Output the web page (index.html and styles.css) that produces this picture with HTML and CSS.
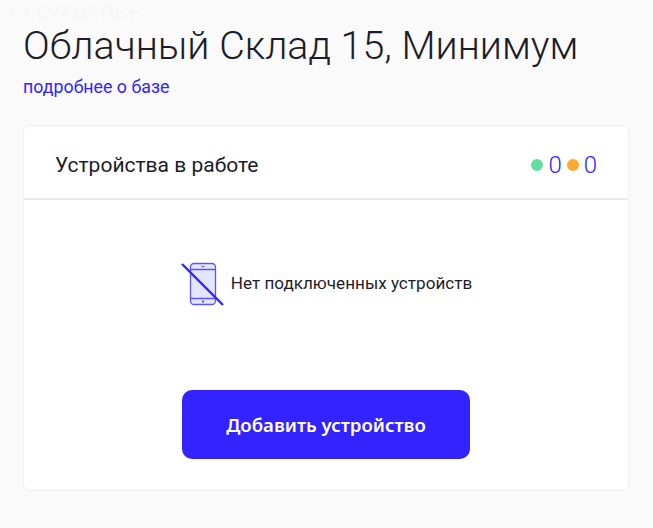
FILE: index.html
```html
<!DOCTYPE html>
<html lang="ru">
<head>
  <meta charset="UTF-8">
  <title>Облачный Склад 15, Минимум</title>
  <link rel="stylesheet" href="styles.css">
</head>
<body>
  <div class="logo">CLEVERENCE</div>
  <main class="content">
    <h1 class="title">Облачный Склад 15, Минимум</h1>
    <a class="more" href="#">подробнее о базе</a>
    <section class="card">
      <header class="card-head">
        <h2 class="card-title">Устройства в работе</h2>
        <div class="counters">
          <span class="dot dot-green"></span>
          <span class="count">0</span>
          <span class="dot dot-orange"></span>
          <span class="count">0</span>
        </div>
      </header>
      <div class="card-body">
        <div class="empty">
          <svg class="empty-icon" width="46" height="46" viewBox="0 0 46 46" fill="none">
            <rect x="10.5" y="3.5" width="25" height="41" rx="3.5" fill="#e4e5ff" stroke="#5b55ff" stroke-width="1.3"/>
            <path d="M10.5 9.5h25M10.5 38.5h25" stroke="#5b55ff" stroke-width="1.3"/>
            <circle cx="23" cy="41.5" r="1" fill="#3324ff"/>
            <path d="M21.5 6.5h3" stroke="#5b55ff" stroke-width="1"/>
            <path d="M2 4l41 41" stroke="#3324ff" stroke-width="2.4"/>
          </svg>
          <span class="empty-text">Нет подключенных устройств</span>
        </div>
        <button class="add-btn" type="button">Добавить устройство</button>
      </div>
    </section>
  </main>
</body>
</html>
```

FILE: styles.css
```css
body {
  margin: 0;
  background-color: #fafafa;
  font-family: Roboto, "Noto Sans", sans-serif;
  color: #1d1d28;
}

.logo {
  height: 22px;
  padding: 1px 0 0 10px;
  font-size: 19px;
  font-weight: 300;
  letter-spacing: 1.7px;
  line-height: 22px;
  color: #f5f5f5;
}

.content {
  padding: 0 24px 0 23px;
}

.title {
  margin: 0;
  height: 46px;
  font-size: 39.4px;
  font-weight: 300;
  line-height: 46px;
  white-space: nowrap;
}

.more {
  display: block;
  margin-top: 7px;
  font-size: 17.8px;
  font-weight: 400;
  line-height: 22px;
  color: #3324ff;
  text-decoration: none;
}

.card {
  margin-top: 27px;
  height: 366px;
  box-sizing: border-box;
  display: flex;
  flex-direction: column;
  background-color: #fff;
  border: 1px solid #f0f0f0;
  border-radius: 6px;
}

.card-head {
  display: flex;
  justify-content: space-between;
  align-items: center;
  height: 74px;
  flex-shrink: 0;
  padding: 6px 31px 0 31px;
  border-bottom: 2px solid #e8e8f6;
  box-sizing: border-box;
}

.card-title {
  margin: 0;
  font-size: 21px;
  font-weight: 400;
}

.counters {
  display: flex;
  align-items: center;
  gap: 5px;
}

.dot {
  width: 12px;
  height: 12px;
  border-radius: 50%;
}

.dot-green {
  background-color: #62dfa0;
}

.dot-orange {
  background-color: #ffa92e;
}

.count {
  font-size: 24px;
  font-weight: 300;
  color: #3324ff;
}

.card-body {
  display: flex;
  flex-direction: column;
  align-items: center;
  flex: 1;
}

.empty {
  display: flex;
  align-items: center;
  gap: 5px;
  margin-top: 60px;
  height: 46px;
}

.empty-text {
  font-size: 17.1px;
  font-weight: 400;
}

.add-btn {
  margin-top: 84px;
  width: 288px;
  height: 69px;
  border: none;
  border-radius: 10px;
  background-color: #3324ff;
  color: #fff;
  font-family: "Noto Sans", sans-serif;
  font-size: 18.6px;
  font-weight: 600;
}
```
